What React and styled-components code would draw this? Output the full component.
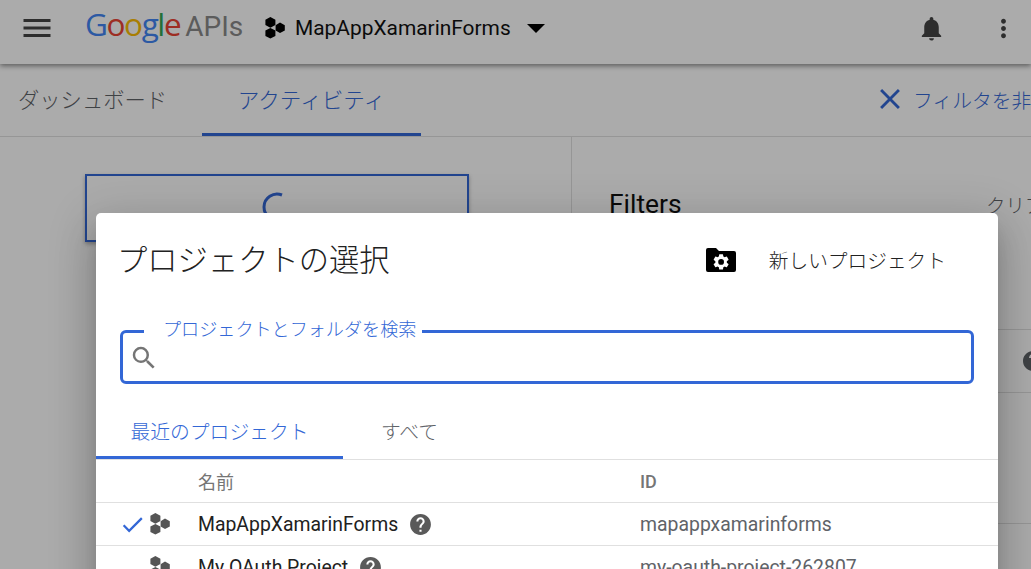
import React from 'react';
import styled, { createGlobalStyle } from 'styled-components';
import { MdMenu, MdNotifications, MdMoreVert, MdClose, MdSearch, MdCheck, MdHelp } from 'react-icons/md';

const BLUE = '#3367d6';
const FONT = '"Roboto", "Noto Sans CJK JP", sans-serif';

const GlobalStyle = createGlobalStyle`
  html, body {
    margin: 0;
    background: #fff;
    overflow: hidden;
  }
  body {
    font-family: ${FONT};
  }
`;

const Page = styled.div`
  position: relative;
  width: 1031px;
  height: 569px;
  overflow: hidden;
`;

const Header = styled.header`
  height: 64px;
  box-sizing: border-box;
  display: flex;
  align-items: center;
  padding: 0 13px 8px 23px;
  background: #fff;
  box-shadow: 0 2px 5px rgba(0, 0, 0, 0.45);
  position: relative;
`;

const MenuButton = styled.div`
  display: flex;
  width: 28px;
  margin-right: 34px;
  color: #444;
  svg {
    margin: -4px;
  }
`;

const Logo = styled.div`
  display: flex;
  align-items: baseline;
  font-family: "Open Sans", sans-serif;
  font-size: 31.5px;
  letter-spacing: -1.4px;
  width: 180px;
  margin-top: -9px;
`;

const Letter = styled.span`
  color: ${(p) => p.$color};
`;

const LogoApis = styled.span`
  color: #8a8a8a;
  font-family: "Roboto", sans-serif;
  font-size: 28px;
  letter-spacing: 0;
  margin-left: 5px;
`;

const ProjectName = styled.div`
  font-size: 20.9px;
  color: #111;
  margin: 0 16px 0 10px;
`;

const Caret = styled.div`
  width: 0;
  height: 0;
  border-left: 9px solid transparent;
  border-right: 9px solid transparent;
  border-top: 9px solid #000;
`;

const HeaderActions = styled.div`
  margin-left: auto;
  display: flex;
  align-items: center;
  gap: 43px;
  color: #444;
`;

const TabBar = styled.nav`
  height: 73px;
  display: flex;
  align-items: stretch;
  border-bottom: 1px solid #e0e0e0;
  box-sizing: border-box;
  padding-left: 18px;
`;

const PageTab = styled.div`
  display: flex;
  align-items: center;
  font-size: ${(p) => (p.$active ? '21.6px' : '21.3px')};
  font-weight: 300;
  color: ${(p) => (p.$active ? BLUE : '#5f6368')};
  width: ${(p) => (p.$active ? '219px' : '184px')};
  justify-content: ${(p) => (p.$active ? 'center' : 'flex-start')};
  border-bottom: 3px solid ${(p) => (p.$active ? BLUE : 'transparent')};
  padding-bottom: 1px;
  box-sizing: border-box;
`;

const HideFilters = styled.div`
  margin-left: auto;
  display: flex;
  align-items: center;
  gap: 8px;
  font-size: 19.8px;
  font-weight: 300;
  color: ${BLUE};
  white-space: nowrap;
  width: 152px;
  flex: none;
  padding-bottom: 2px;
  svg {
    margin: 0 -2px 0 -6px;
    flex: none;
  }
`;

const Body = styled.div`
  display: grid;
  grid-template-columns: 572px 1fr;
  height: 432px;
`;

const MainColumn = styled.main`
  border-right: 1px solid #e0e0e0;
  padding: 37px 0 0 85px;
`;

const LoadingCard = styled.div`
  width: 384px;
  height: 68px;
  box-sizing: border-box;
  border: 2px solid ${BLUE};
  display: flex;
  align-items: center;
  justify-content: center;
  padding-bottom: 2px;
  box-shadow: 0 2px 4px rgba(0, 0, 0, 0.3);
`;

const FilterPanel = styled.aside`
  padding: 50px 0 0 37px;
`;

const FilterHead = styled.div`
  display: flex;
  justify-content: space-between;
  align-items: center;
  height: 34px;
  margin-bottom: 108px;
`;

const FilterTitle = styled.div`
  font-size: 26.4px;
  color: #111;
`;

const ClearLink = styled.div`
  font-size: 19.5px;
  font-weight: 300;
  color: #5f6368;
  white-space: nowrap;
  width: 45px;
  overflow: hidden;
`;

const FilterRow = styled.div`
  height: ${(p) => p.$height}px;
  border-top: 1px solid #e0e0e0;
  display: flex;
  align-items: center;
  justify-content: flex-end;
  margin-left: -37px;
  color: #5f6368;
  svg {
    margin-right: -14px;
  }
`;

const Scrim = styled.div`
  position: absolute;
  inset: 0;
  background: rgba(0, 0, 0, 0.33);
  padding: 213px 0 0 96px;
  overflow: hidden;
`;

const Dialog = styled.section`
  width: 902px;
  height: 500px;
  background: #fff;
  border-radius: 5px;
  box-shadow: 0 11px 15px -7px rgba(0, 0, 0, 0.2), 0 24px 38px 3px rgba(0, 0, 0, 0.14),
    0 9px 46px 8px rgba(0, 0, 0, 0.12);
`;

const DialogHead = styled.div`
  display: flex;
  align-items: center;
  height: 92px;
  padding: 0 52px 0 21px;
  box-sizing: border-box;
`;

const DialogTitle = styled.h2`
  margin: -2px 0 0;
  font-size: 30.3px;
  font-weight: 300;
  color: #212121;
`;

const NewProject = styled.div`
  margin-left: auto;
  display: flex;
  align-items: center;
  gap: 33px;
  font-size: 19.7px;
  font-weight: 300;
  color: #212121;
  svg {
    margin-top: 2px;
  }
`;

const SearchField = styled.div`
  position: relative;
  margin: 25px 24px 0;
  height: 54px;
  box-sizing: border-box;
  border: 3px solid ${BLUE};
  border-radius: 6px;
  display: flex;
  align-items: center;
  padding: 2px 0 0 6px;
  color: #757575;
`;

const SearchLabel = styled.label`
  position: absolute;
  left: 21px;
  top: -14px;
  padding: 0 6px 0 19px;
  background: #fff;
  font-size: 18.1px;
  line-height: 22px;
  font-weight: 300;
  color: ${BLUE};
`;

const DialogTabs = styled.div`
  display: flex;
  margin-top: 24px;
  height: 51px;
  border-bottom: 1px solid #e0e0e0;
`;

const DialogTab = styled.div`
  width: ${(p) => (p.$active ? '247px' : '133px')};
  box-sizing: border-box;
  height: 51px;
  display: flex;
  align-items: center;
  justify-content: center;
  padding-bottom: 3px;
  font-size: 19.8px;
  font-weight: 300;
  color: ${(p) => (p.$active ? BLUE : '#5f6368')};
  border-bottom: 3px solid ${(p) => (p.$active ? BLUE : 'transparent')};
`;

const Row = styled.div`
  display: grid;
  grid-template-columns: 102px 442px 1fr;
  align-items: center;
  height: 43px;
  box-sizing: border-box;
  border-bottom: 1px solid #e0e0e0;
  font-size: 19.4px;
  color: #212121;
`;

const HeadRow = styled(Row)`
  font-size: 18px;
  color: #757575;
`;

const HeadId = styled.span`
  font-weight: 500;
`;

const RowIcons = styled.div`
  display: flex;
  align-items: center;
  justify-content: flex-end;
  gap: 4px;
  padding-right: 28px;
  color: ${BLUE};
`;

const NameCell = styled.div`
  display: flex;
  align-items: center;
  gap: 10px;
  color: #212121;
  svg {
    color: #5a5a5a;
  }
`;

const IdCell = styled.div`
  color: #5f6368;
`;

const HexIcon = ({ color = '#555', size = 20 }) => (
  <svg width={size} height={size * 1.08} viewBox="0 0 20 21.6" fill={color}>
    <polygon points="5.4,0 10.4,2.7 10.4,8 5.4,10.7 0.4,8 0.4,2.7" />
    <polygon points="15,5.6 19.8,8.2 19.8,13.4 15,16 10.6,13.4 10.6,8.2" />
    <polygon points="5.4,10.9 10.4,13.6 10.4,18.9 5.4,21.6 0.4,18.9 0.4,13.6" />
  </svg>
);

const FolderGearIcon = () => (
  <svg width="30" height="24" viewBox="0 0 30 24">
    <path
      d="M2 0h8l3 3h15a2 2 0 0 1 2 2v17a2 2 0 0 1-2 2H2a2 2 0 0 1-2-2V2a2 2 0 0 1 2-2z"
      fill="#000"
    />
    <g transform="translate(5.5 4.3) scale(0.8)" fill="#fff">
      <path d="M19.14 12.94c.04-.3.06-.61.06-.94s-.02-.64-.07-.94l2.03-1.58a.49.49 0 0 0 .12-.61l-1.92-3.32a.49.49 0 0 0-.59-.22l-2.39.96a7 7 0 0 0-1.62-.94l-.36-2.54a.48.48 0 0 0-.48-.41h-3.84a.48.48 0 0 0-.47.41l-.36 2.54c-.59.24-1.13.57-1.62.94l-2.39-.96a.49.49 0 0 0-.59.22L2.74 8.87a.48.48 0 0 0 .12.61l2.03 1.58c-.05.3-.09.63-.09.94s.02.64.07.94l-2.03 1.58a.49.49 0 0 0-.12.61l1.92 3.32c.12.22.37.29.59.22l2.39-.96c.5.38 1.03.7 1.62.94l.36 2.54c.05.24.24.41.48.41h3.84c.24 0 .44-.17.47-.41l.36-2.54c.59-.24 1.13-.56 1.62-.94l2.39.96c.22.08.47 0 .59-.22l1.92-3.32a.48.48 0 0 0-.12-.61l-2.01-1.58zM12 15.6A3.6 3.6 0 1 1 12 8.4a3.6 3.6 0 0 1 0 7.2z" />
    </g>
  </svg>
);

const Spinner = () => (
  <svg width="32" height="32" viewBox="0 0 32 32" fill="none">
    <path d="M21 4 A13 13 0 1 0 21 28" stroke={BLUE} strokeWidth="3" />
  </svg>
);

const googleLetters = [
  ['G', '#4285f4'],
  ['o', '#ea4335'],
  ['o', '#fbbc05'],
  ['g', '#4285f4'],
  ['l', '#34a853'],
  ['e', '#ea4335'],
];

const projects = [
  { name: 'MapAppXamarinForms', id: 'mapappxamarinforms', current: true },
  { name: 'My OAuth Project', id: 'my-oauth-project-262807' },
];

const App = () => (
  <Page>
    <GlobalStyle />
    <Header>
      <MenuButton>
        <MdMenu size={36} />
      </MenuButton>
      <Logo>
        {googleLetters.map(([letter, color], index) => (
          <Letter key={index} $color={color}>
            {letter}
          </Letter>
        ))}
        <LogoApis>APIs</LogoApis>
      </Logo>
      <HexIcon color="#000" size={20} />
      <ProjectName>MapAppXamarinForms</ProjectName>
      <Caret />
      <HeaderActions>
        <MdNotifications size={29} />
        <MdMoreVert size={29} />
      </HeaderActions>
    </Header>
    <TabBar>
      <PageTab>ダッシュボード</PageTab>
      <PageTab $active>アクティビティ</PageTab>
      <HideFilters>
        <MdClose size={34} />
        フィルタを非表示
      </HideFilters>
    </TabBar>
    <Body>
      <MainColumn>
        <LoadingCard>
          <Spinner />
        </LoadingCard>
      </MainColumn>
      <FilterPanel>
        <FilterHead>
          <FilterTitle>Filters</FilterTitle>
          <ClearLink>クリア</ClearLink>
        </FilterHead>
        <FilterRow $height={62}>
          <MdHelp size={24} />
        </FilterRow>
        <FilterRow $height={130} />
        <FilterRow $height={40} />
      </FilterPanel>
    </Body>
    <Scrim>
      <Dialog>
        <DialogHead>
          <DialogTitle>プロジェクトの選択</DialogTitle>
          <NewProject>
            <FolderGearIcon />
            新しいプロジェクト
          </NewProject>
        </DialogHead>
        <SearchField>
          <SearchLabel>プロジェクトとフォルダを検索</SearchLabel>
          <MdSearch size={30} />
        </SearchField>
        <DialogTabs>
          <DialogTab $active>最近のプロジェクト</DialogTab>
          <DialogTab>すべて</DialogTab>
        </DialogTabs>
        <HeadRow>
          <span />
          <span>名前</span>
          <HeadId>ID</HeadId>
        </HeadRow>
        {projects.map((project) => (
          <Row key={project.id}>
            <RowIcons>
              {project.current && <MdCheck size={27} />}
              <HexIcon />
            </RowIcons>
            <NameCell>
              {project.name}
              <MdHelp size={25} />
            </NameCell>
            <IdCell>{project.id}</IdCell>
          </Row>
        ))}
      </Dialog>
    </Scrim>
  </Page>
);

export default App;
